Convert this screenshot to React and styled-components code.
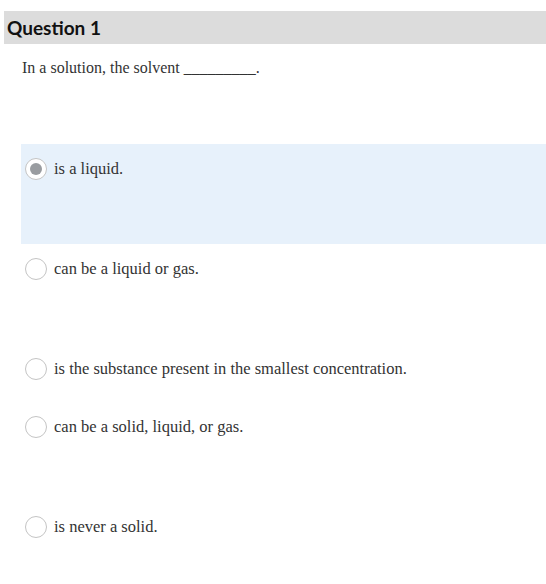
import styled, { createGlobalStyle } from "styled-components"

const Global = createGlobalStyle`
    body {
        margin: 0;
        background: #fff;
        font-family: "Liberation Serif", serif;
    }
`

const Page = styled.div`
    padding: 11px 0 0 4px;
    width: 542px;
    font-family: "Liberation Serif", serif;
    font-size: 16px;
    color: #333;
`

const Header = styled.div`
    background-color: #dcdcdc;
    height: 33px;
    display: flex;
    align-items: center;
    padding-left: 3px;
`

const Title = styled.h2`
    margin: 0;
    font-family: Lato, sans-serif;
    font-weight: 700;
    font-size: 19px;
    color: #111;
`

const Prompt = styled.p`
    margin: 0;
    padding: 14px 0 0 18px;
    height: 86px;
    line-height: 20px;
`

const Options = styled.div`
    margin-left: 17px;
    display: flex;
    flex-direction: column;
`

const Option = styled.label`
    display: flex;
    align-items: flex-start;
    gap: 7px;
    height: ${p => p.$h}px;
    padding: 13px 0 0 4px;
    box-sizing: border-box;
    background-color: ${p => (p.$checked ? "#e7f1fb" : "transparent")};
`

const Radio = styled.span`
    width: 20px;
    height: 20px;
    margin-top: 1px;
    border-radius: 50%;
    border: 1px solid #c4c4c4;
    background: #fff;
    display: flex;
    align-items: center;
    justify-content: center;
    flex-shrink: 0;

    &::after {
        content: "";
        width: 12px;
        height: 12px;
        border-radius: 50%;
        background: #999ca0;
        display: ${p => (p.$checked ? "block" : "none")};
    }
`

const Text = styled.span`
    font-size: 16.5px;
    line-height: 24px;
`

const answers = [
    { text: "is a liquid.", h: 100, checked: true },
    { text: "can be a liquid or gas.", h: 100 },
    { text: "is the substance present in the smallest concentration.", h: 58 },
    { text: "can be a solid, liquid, or gas.", h: 100 },
    { text: "is never a solid.", h: 60 },
]

export default function App() {
    return (
        <Page>
            <Global />
            <Header>
                <Title>Question 1</Title>
            </Header>
            <Prompt>In a solution, the solvent _________.</Prompt>
            <Options>
                {answers.map(a => (
                    <Option key={a.text} $h={a.h} $checked={a.checked}>
                        <Radio $checked={a.checked} />
                        <Text>{a.text}</Text>
                    </Option>
                ))}
            </Options>
        </Page>
    )
}
